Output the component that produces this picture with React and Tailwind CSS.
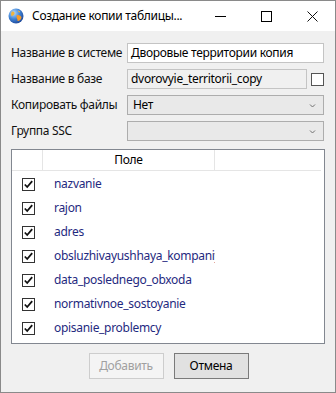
import React from "react";

const font = { fontFamily: '"Noto Sans", "Open Sans", sans-serif' };

const fields = [
  "nazvanie",
  "rajon",
  "adres",
  "obsluzhivayushhaya_kompaniya",
  "data_poslednego_obxoda",
  "normativnoe_sostoyanie",
  "opisanie_problemcy",
];

const Globe = () => (
  <svg width="16" height="16" viewBox="0 0 16 16">
    <defs>
      <radialGradient id="g" cx="0.35" cy="0.3" r="0.8">
        <stop offset="0" stopColor="#b9dcff" />
        <stop offset="0.5" stopColor="#3f84d6" />
        <stop offset="1" stopColor="#1b3f8f" />
      </radialGradient>
    </defs>
    <circle cx="8" cy="8" r="7.5" fill="url(#g)" />
    <path d="M4 3.5 C6 3 7 4.5 6.5 6 C6 7.5 4.5 7 4 8.5 C3 7.5 2.5 5 4 3.5Z" fill="#f0b43c" />
    <path d="M8.5 7.5 C10.5 6.5 13 7.5 13.5 9.5 C13 12 11 13.5 9.5 13 C10 11.5 8 10 8.5 7.5Z" fill="#f29a2e" />
    <path d="M10 2.5 C11.5 2.5 12.5 3.5 12 4.5 C11 4.5 10 3.5 10 2.5Z" fill="#f0b43c" />
  </svg>
);

const Chevron = () => (
  <svg width="7" height="5" viewBox="0 0 7 5" className="absolute right-[7px] top-[7px]">
    <path d="M1 1.5 L3.5 4 L6 1.5" stroke="#707070" strokeWidth="1" fill="none" />
  </svg>
);

const Check = ({ checked }) => (
  <div className="w-[13px] h-[13px] border border-[#333] bg-white flex items-center justify-center">
    {checked && (
      <svg width="11" height="11" viewBox="0 0 11 11">
        <path d="M1.8 5.5 L4.2 8 L9.2 2.2" stroke="#111" strokeWidth="1.8" fill="none" />
      </svg>
    )}
  </div>
);

const Row = ({ label, children }) => (
  <div className="flex items-center h-[20px]">
    <div className="w-[116px] text-[12px] text-[#111] whitespace-nowrap">{label}</div>
    {children}
  </div>
);

export default function App() {
  return (
    <div className="w-[336px] h-[393px] border border-[#8a8a8a] bg-[#f0f0f0] flex flex-col overflow-hidden tracking-[-0.3px]" style={font}>
      <div className="h-[30px] bg-white flex items-center shrink-0">
        <div className="ml-[7px] mr-[8px] flex">
          <Globe />
        </div>
        <span className="text-[12px] text-black whitespace-nowrap">Создание копии таблицы...</span>
        <div className="ml-auto flex items-center h-full">
          <div className="w-[46px] h-full flex items-center justify-center">
            <div className="w-[11px] h-px bg-black" />
          </div>
          <div className="w-[46px] h-full flex items-center justify-center">
            <div className="w-[11px] h-[11px] border border-black" />
          </div>
          <div className="w-[46px] h-full flex items-center justify-center">
            <svg width="11" height="11" viewBox="0 0 11 11">
              <path d="M0.5 0.5 L10.5 10.5 M10.5 0.5 L0.5 10.5" stroke="#111" strokeWidth="1" />
            </svg>
          </div>
        </div>
      </div>

      <div className="flex flex-col pt-[12px] px-[10px] gap-[6px]">
        <Row label="Название в системе">
          <div className="w-[197px] h-[20px] bg-white border border-[#c4c4c4] text-[12px] text-black px-[3px] leading-[18px] whitespace-nowrap overflow-hidden">
            Дворовые территории копия
          </div>
        </Row>
        <Row label="Название в базе">
          <div className="w-[180px] h-[20px] bg-[#f0f0f0] border border-[#c4c4c4] text-[12px] text-black px-[3px] leading-[18px] whitespace-nowrap overflow-hidden">
            dvorovyie_territorii_copy
          </div>
          <div className="ml-[4px] w-[13px] h-[13px] border border-[#555] bg-white" />
        </Row>
        <Row label="Копировать файлы">
          <div className="relative w-[197px] h-[20px] bg-[#e9e9e9] border border-[#adadad] text-[12px] text-black pl-[5px] leading-[18px]">
            Нет
            <Chevron />
          </div>
        </Row>
        <Row label="Группа SSC">
          <div className="relative w-[197px] h-[20px] bg-[#e9e9e9] border border-[#adadad]">
            <Chevron />
          </div>
        </Row>
      </div>

      <div className="mx-[10px] mt-[8px] h-[195px] bg-white border border-[#828790] flex flex-col">
        <div className="flex h-[21px] border-b border-[#e5e5e5] mr-[3px] text-[12px] text-black">
          <div className="w-[31px] border-r border-[#e5e5e5]" />
          <div className="w-[172px] border-r border-[#e5e5e5] flex items-center justify-center">Поле</div>
          <div className="flex-1" />
        </div>
        <div className="flex flex-col pt-[1px]">
          {fields.map((f) => (
            <div key={f} className="flex items-center h-[24px]">
              <div className="w-[31px] flex justify-center pl-[2px]">
                <Check checked />
              </div>
              <div className="w-[172px] pl-[11px] text-[12px] text-[#1f2a80] whitespace-nowrap overflow-hidden">{f}</div>
            </div>
          ))}
        </div>
      </div>

      <div className="flex justify-center gap-[10px] mt-[9px] pl-[1px]">
        <div className="w-[75px] h-[26px] bg-[#f4f4f4] border border-[#cdcdcd] text-[12px] text-[#a0a0a0] flex items-center justify-center">
          Добавить
        </div>
        <div className="w-[75px] h-[26px] bg-[#e1e1e1] border border-[#7a7a7a] text-[12px] text-black flex items-center justify-center">
          Отмена
        </div>
      </div>
    </div>
  );
}
